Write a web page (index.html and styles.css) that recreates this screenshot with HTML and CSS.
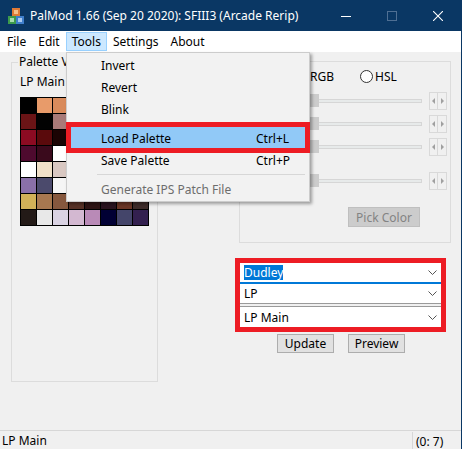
FILE: index.html
```html
<!DOCTYPE html>
<html>
<head>
<meta charset="utf-8">
<link rel="stylesheet" href="styles.css">
</head>
<body>
<div class="window">

  <div class="titlebar">
    <svg class="app-icon" width="16" height="16" viewBox="0 0 16 16">
      <rect x="4" y="0" width="8" height="8" fill="#e07a36"/>
      <rect x="6" y="2" width="4" height="4" fill="#f6c08a"/>
      <rect x="0" y="8" width="8" height="8" fill="#3d9a4c"/>
      <rect x="2" y="10" width="4" height="4" fill="#a8dcae"/>
      <rect x="8" y="8" width="8" height="8" fill="#3f7fcc"/>
      <rect x="10" y="10" width="4" height="4" fill="#a9c9f0"/>
    </svg>
    <span class="title">PalMod 1.66 (Sep 20 2020): SFIII3 (Arcade Rerip)</span>
    <div class="caption-buttons">
      <div class="cap-btn">
        <svg width="10" height="10" viewBox="0 0 10 10"><line x1="0" y1="5.5" x2="10" y2="5.5" stroke="#fff" stroke-width="1"/></svg>
      </div>
      <div class="cap-btn">
        <svg width="10" height="10" viewBox="0 0 10 10"><rect x="0.5" y="0.5" width="9" height="9" fill="none" stroke="#4f6f93" stroke-width="1"/></svg>
      </div>
      <div class="cap-btn">
        <svg width="10" height="10" viewBox="0 0 10 10"><path d="M0 0 L10 10 M10 0 L0 10" stroke="#fff" stroke-width="1.1"/></svg>
      </div>
    </div>
  </div>

  <div class="menubar">
    <span class="menu-item">File</span>
    <span class="menu-item">Edit</span>
    <span class="menu-item open">Tools</span>
    <span class="menu-item">Settings</span>
    <span class="menu-item">About</span>
  </div>

  <div class="client">
    <fieldset class="palette-group">
      <legend>Palette View</legend>
      <div class="pal-name">LP Main</div>
      <div class="pal-grid" id="pal_grid"></div>
    </fieldset>

    <div class="right-col">
      <div class="color-group">
        <div class="mode-row">
          <label class="radio rgb"><span class="radio-dot checked"></span>RGB</label>
          <label class="radio"><span class="radio-dot"></span>HSL</label>
        </div>
        <div class="slider-row">
          <div class="track"><span class="thumb"></span></div>
          <div class="spin"><span><i class="tri-l"></i></span><span><i class="tri-r"></i></span></div>
        </div>
        <div class="slider-row">
          <div class="track"><span class="thumb"></span></div>
          <div class="spin"><span><i class="tri-l"></i></span><span><i class="tri-r"></i></span></div>
        </div>
        <div class="slider-row">
          <div class="track"><span class="thumb"></span></div>
          <div class="spin"><span><i class="tri-l"></i></span><span><i class="tri-r"></i></span></div>
        </div>
        <div class="slider-row alpha">
          <div class="track"><span class="thumb"></span></div>
          <div class="spin"><span><i class="tri-l"></i></span><span><i class="tri-r"></i></span></div>
        </div>
        <div class="pick-row">
          <button class="pick-btn" disabled>Pick Color</button>
        </div>
      </div>

      <div class="combo-frame">
        <div class="combo focused">
          <span class="sel">Dudley</span>
          <svg class="chev" width="9" height="5" viewBox="0 0 9 5"><polyline points="0.5,0.5 4.5,4.5 8.5,0.5" fill="none" stroke="#555" stroke-width="1"/></svg>
        </div>
        <div class="combo">
          <span>LP</span>
          <svg class="chev" width="9" height="5" viewBox="0 0 9 5"><polyline points="0.5,0.5 4.5,4.5 8.5,0.5" fill="none" stroke="#555" stroke-width="1"/></svg>
        </div>
        <div class="combo last">
          <span>LP Main</span>
          <svg class="chev" width="9" height="5" viewBox="0 0 9 5"><polyline points="0.5,0.5 4.5,4.5 8.5,0.5" fill="none" stroke="#555" stroke-width="1"/></svg>
        </div>
      </div>

      <div class="action-row">
        <button class="btn">Update</button>
        <button class="btn">Preview</button>
      </div>
    </div>
  </div>

  <div class="statusbar">
    <span class="status-main">LP Main</span>
    <span class="status-pos">(0: 7)</span>
  </div>

  <!-- Tools menu, open -->
  <div class="dropdown">
    <div class="dd-item"><span class="dd-label">Invert</span></div>
    <div class="dd-item"><span class="dd-label">Revert</span></div>
    <div class="dd-item"><span class="dd-label">Blink</span></div>
    <div class="dd-sep"></div>
    <div class="dd-item hl"><span class="dd-label">Load Palette</span><span>Ctrl+L</span></div>
    <div class="dd-item"><span class="dd-label">Save Palette</span><span>Ctrl+P</span></div>
    <div class="dd-sep"></div>
    <div class="dd-item disabled"><span class="dd-label">Generate IPS Patch File</span></div>
  </div>

  <div class="mark"></div>
</div>

<script type="text/javascript">
  var colors = [
    "#000000","#e89b6a","#d98b5c","#c27650","#a86244","#8b4e38","#6e3a2a","#4f281e",
    "#6a1416","#020202","#a87a78","#8a5c5a","#6e4442","#522e2c","#381c1c","#201010",
    "#8c0b22","#5a0a0c","#1b0404","#300808","#400a10","#600e18","#781428","#a01c34",
    "#4e0a2e","#3a0a1c","#ffffff","#f0f0f0","#d8d8d8","#b8b8b8","#909090","#686868",
    "#ffffff","#f0e0c8","#d9c8c2","#c4aca4","#a88e86","#8c726a","#70584f","#544038",
    "#8a70a8","#4b4a6c","#f5f5f5","#e0e0e8","#c8c8d8","#a8a8c0","#8888a8","#686890",
    "#d2b158","#a77850","#86583e","#573126","#2e1414","#2a1420","#6a3626","#3e2c2a",
    "#231a17","#e8e8e8","#dad3e3","#d3b8d1","#b98ab7","#010034","#44456a","#33204f"
  ];
  var grid = document.getElementById("pal_grid");
  for (var i = 0; i < colors.length; i++) {
    var cell = document.createElement("div");
    cell.style.background = colors[i];
    grid.appendChild(cell);
  }
</script>
</body>
</html>
```

FILE: styles.css
```css
body {
  margin: 0;
  background: #F0F0F0;
  font-family: "Segoe UI", "Noto Sans", sans-serif;
  font-size: 12px;
  color: #000000;
}

.window {
  position: relative;
  width: 461px;
  height: 449px;
  border-right: 1px solid #0a3764;
  display: flex;
  flex-direction: column;
  overflow: hidden;
  background: #F0F0F0;
}

/* title bar */
.titlebar {
  height: 31px;
  flex: none;
  background: #0a3764;
  color: #ffffff;
  display: flex;
  align-items: center;
}
.app-icon {
  margin-left: 8px;
}
.title {
  margin-left: 6px;
  white-space: nowrap;
}
.caption-buttons {
  margin-left: auto;
  display: flex;
}
.cap-btn {
  width: 46px;
  height: 31px;
  display: flex;
  align-items: center;
  justify-content: center;
}

/* menu bar */
.menubar {
  height: 21px;
  flex: none;
  box-sizing: border-box;
  padding: 1px 0 0 1px;
  background: #ffffff;
  display: flex;
  align-items: flex-start;
}
.menu-item {
  box-sizing: border-box;
  height: 19px;
  line-height: 17px;
  padding: 0 5px;
  border: 1px solid transparent;
}
.menu-item.open {
  background: #CCE8FF;
  border-color: #99D1FF;
}

/* client area */
.client {
  flex: 1;
  display: flex;
  align-items: flex-start;
  padding-left: 11px;
}

.palette-group {
  box-sizing: border-box;
  width: 147px;
  height: 328px;
  margin: 2px 0 0 0;
  padding: 0 8px;
  border: 1px solid #DCDCDC;
  min-width: 0;
}
.palette-group legend {
  padding: 0 1px;
  margin-left: -2px;
  line-height: 16px;
}
.pal-name {
  margin-top: 4px;
  line-height: 16px;
}
.pal-grid {
  margin-top: 7px;
  width: max-content;
  display: grid;
  grid-template-columns: repeat(8, 15px);
  grid-auto-rows: 15px;
  gap: 1px;
  padding: 1px;
  background: #000000;
}

.right-col {
  margin-left: 77px;
  width: 216px;
  display: flex;
  flex-direction: column;
}

.color-group {
  box-sizing: border-box;
  width: 212px;
  height: 182px;
  margin: 9px 0 0 4px;
  border: 1px solid #DCDCDC;
  padding: 6px 3px 0 0;
}
.mode-row {
  height: 16px;
  display: flex;
  align-items: center;
  padding-left: 55px;
}
.radio {
  display: flex;
  align-items: center;
}
.radio.rgb {
  width: 65px;
}
.radio-dot {
  box-sizing: border-box;
  width: 13px;
  height: 13px;
  margin-right: 2px;
  border: 1px solid #333333;
  border-radius: 50%;
  background: #ffffff;
  display: flex;
  align-items: center;
  justify-content: center;
}
.radio-dot.checked::after {
  content: "";
  width: 7px;
  height: 7px;
  border-radius: 50%;
  background: #333333;
}

.slider-row {
  height: 18px;
  margin-top: 5px;
  padding-left: 67px;
  display: flex;
  align-items: center;
}
.mode-row + .slider-row {
  margin-top: 8px;
}
.slider-row.alpha {
  margin-top: 16px;
}
.track {
  position: relative;
  flex: 1;
  height: 4px;
  margin-right: 7px;
  box-sizing: border-box;
  background: #E7EAEA;
  border: 1px solid #D6D6D6;
}
.thumb {
  position: absolute;
  left: 0;
  top: -6px;
  width: 11px;
  height: 13px;
  background: #CCCCCC;
}
.spin {
  display: flex;
  width: 18px;
  height: 18px;
}
.spin span {
  box-sizing: border-box;
  width: 9px;
  height: 18px;
  border: 1px solid #D9D9D9;
  display: flex;
  align-items: center;
  justify-content: center;
}
.spin span + span {
  border-left: none;
}
.tri-l, .tri-r {
  width: 0;
  height: 0;
  border-top: 3px solid transparent;
  border-bottom: 3px solid transparent;
}
.tri-l {
  border-right: 3px solid #A0A0A0;
}
.tri-r {
  border-left: 3px solid #A0A0A0;
}

.pick-row {
  margin-top: 17px;
  padding-left: 108px;
}
.pick-btn {
  width: 72px;
  height: 20px;
  padding: 0;
  background: #CCCCCC;
  border: 1px solid #BFBFBF;
  color: #838383;
  font-family: inherit;
  font-size: 12px;
}

/* combos, marked with a red frame */
.combo-frame {
  box-sizing: border-box;
  width: 211px;
  margin-top: 15px;
  border: 5px solid #ED1C24;
  background: #F0F0F0;
}
.combo {
  box-sizing: border-box;
  height: 20px;
  padding: 0 4px;
  background: #ffffff;
  display: flex;
  align-items: center;
  border-bottom: 1px solid #9A9A9A;
}
.combo.focused {
  height: 21px;
  border-bottom: 2px solid #0078D7;
}
.combo.last {
  height: 21px;
  margin-top: 2px;
  border-bottom: none;
  border-top: 1px solid #9A9A9A;
}
.combo .sel {
  background: #0078D7;
  color: #ffffff;
  line-height: 15px;
}
.chev {
  margin-left: auto;
}

.action-row {
  margin-top: 2px;
  padding-left: 42px;
  display: flex;
  gap: 14px;
}
.btn {
  width: 57px;
  height: 19px;
  padding: 0;
  background: #E1E1E1;
  border: 1px solid #ADADAD;
  font-family: inherit;
  font-size: 12px;
  color: #000000;
}

/* status bar */
.statusbar {
  height: 19px;
  flex: none;
  box-sizing: border-box;
  border-top: 1px solid #D7D7D7;
  display: flex;
}
.status-main {
  flex: 1;
  padding: 1px 0 0 2px;
  line-height: 18px;
}
.status-pos {
  width: 45px;
  margin-top: 1px;
  border-left: 1px solid #D7D7D7;
  padding: 1px 0 0 3px;
  line-height: 17px;
}

/* open Tools menu */
.dropdown {
  position: absolute;
  left: 66px;
  top: 52px;
  width: 244px;
  box-sizing: border-box;
  padding: 1px 2px;
  background: #F2F2F2;
  border: 1px solid #CCCCCC;
  box-shadow: 2px 2px 3px rgba(0, 0, 0, 0.35);
}
.dd-item {
  height: 22px;
  padding-left: 32px;
  display: flex;
  align-items: center;
}
.dd-label {
  width: 155px;
}
.dd-item.hl {
  background: #91C9F7;
}
.dd-item.disabled {
  color: #6D6D6D;
}
.dd-sep {
  height: 1px;
  margin: 3px 2px 3px 28px;
  background: #D7D7D7;
}

.mark {
  position: absolute;
  left: 66px;
  top: 122px;
  width: 244px;
  height: 31px;
  box-sizing: border-box;
  border: 5px solid #ED1C24;
}
```
